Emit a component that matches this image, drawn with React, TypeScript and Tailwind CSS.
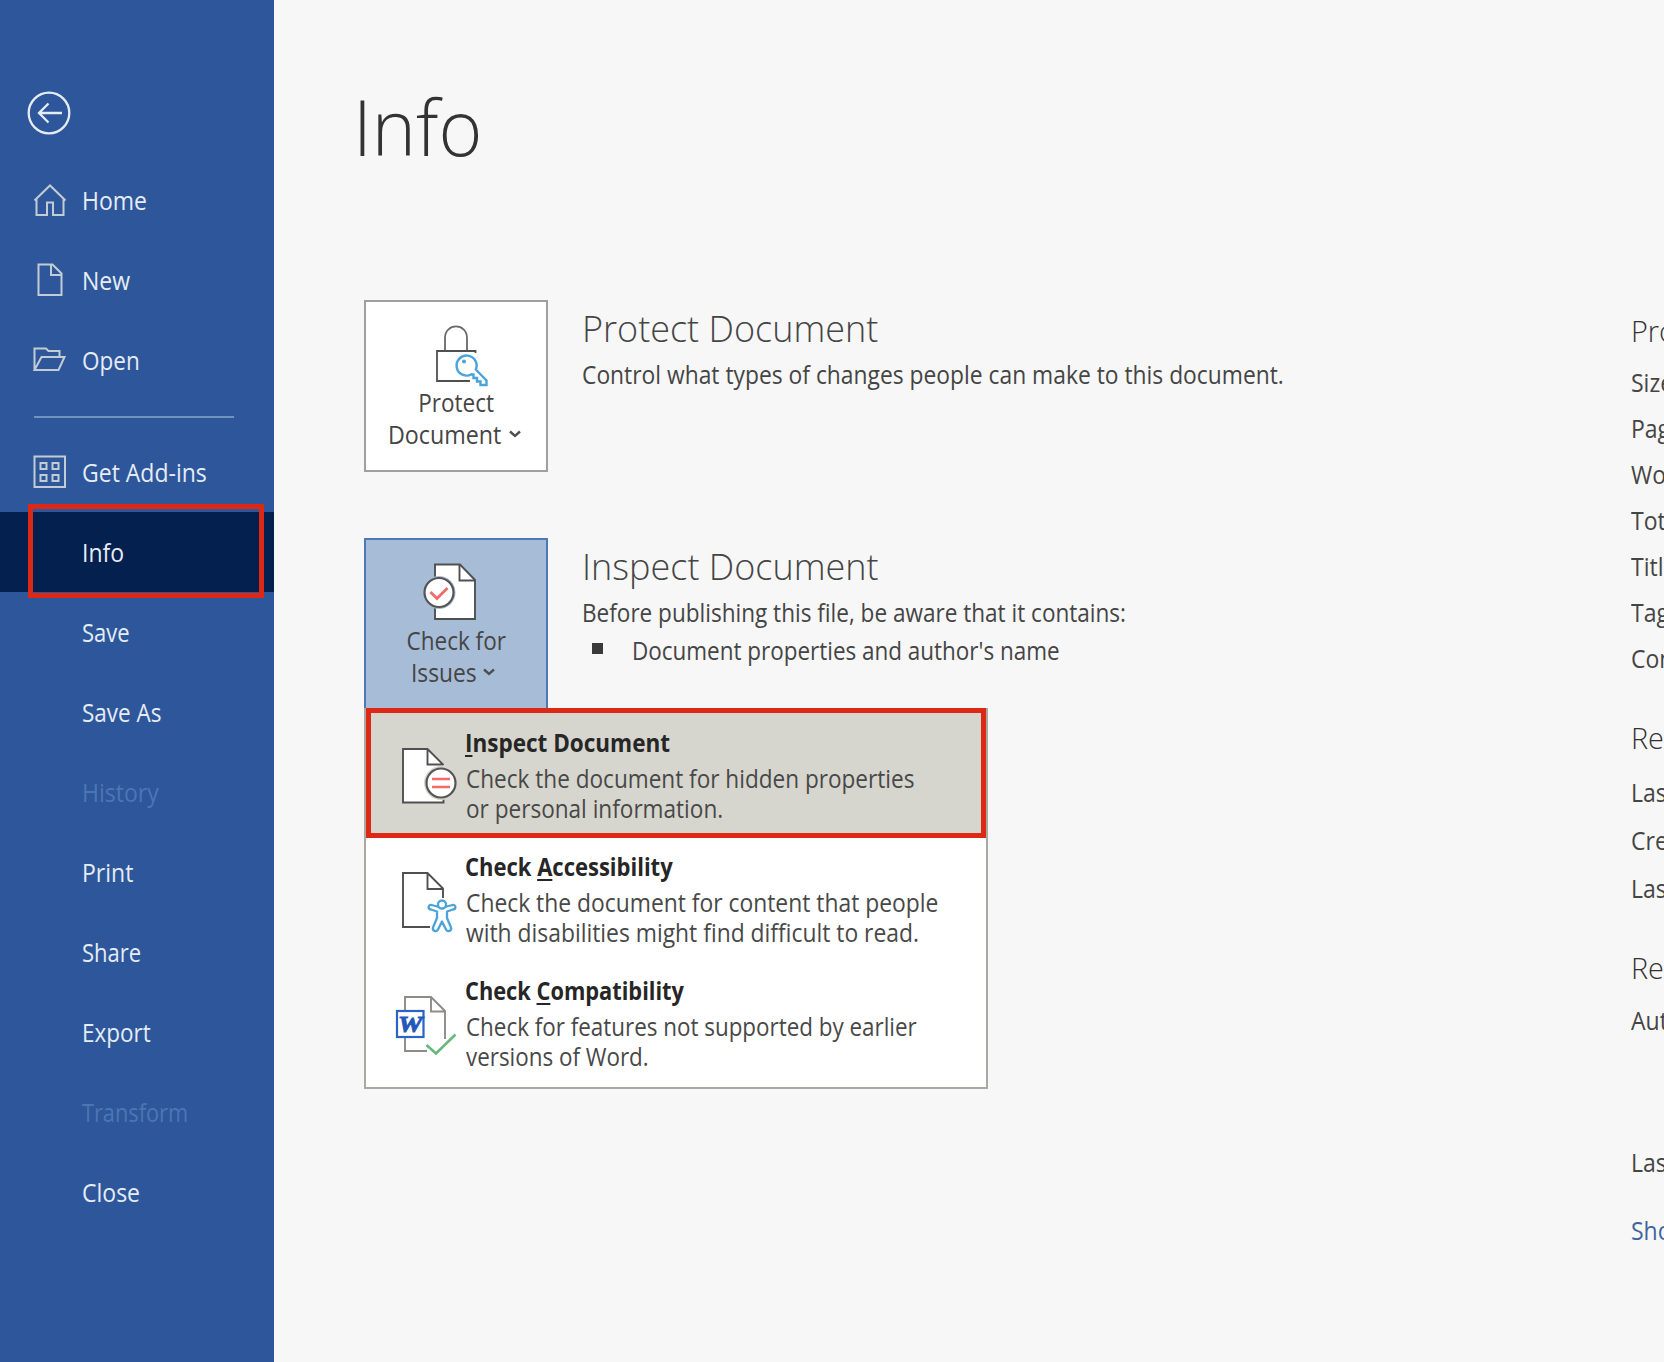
import type { ReactNode } from "react";

const NAV_STROKE = "#c3ccd2";
const DARK = "#505050";

function HomeIcon() {
  return (
    <svg width="34" height="34" viewBox="0 0 34 34" fill="none" stroke={NAV_STROKE} strokeWidth="2">
      <path d="M1.500 17.500 L17 2.500 L32.500 17.500 M3.500 16 V32 H14 V19.500 H20 V32 H30.500 V16" />
    </svg>
  );
}

function NewIcon() {
  return (
    <svg width="34" height="34" viewBox="0 0 34 34" fill="none" stroke={NAV_STROKE} strokeWidth="2">
      <path d="M5.500 1.500 H19.500 L28.500 10.500 V32 H5.500 Z M18 1.500 V12 H28.500" />
    </svg>
  );
}

function OpenIcon() {
  return (
    <svg width="34" height="34" viewBox="0 0 34 34" fill="none" stroke={NAV_STROKE} strokeWidth="2">
      <path d="M1.500 27 V5.500 H13 L15.500 8 H26.500 V14 M1.500 27 L8.500 14 H31.500 L25.500 27 Z" />
    </svg>
  );
}

function AddinsIcon() {
  return (
    <svg width="34" height="34" viewBox="0 0 34 34" fill="none" stroke={NAV_STROKE} strokeWidth="2">
      <rect x="1.500" y="1.500" width="30.500" height="30.500" />
      <rect x="7.500" y="8" width="6" height="6" />
      <rect x="19.500" y="8" width="6" height="6" />
      <rect x="7.500" y="20" width="6" height="6" />
      <rect x="19.500" y="20" width="6" height="6" />
    </svg>
  );
}

type NavItem = { label: string; icon?: ReactNode; disabled?: boolean; active?: boolean; scale?: string };

const topNav: NavItem[] = [
  { label: "Home", icon: <HomeIcon /> },
  { label: "New", icon: <NewIcon /> },
  { label: "Open", icon: <OpenIcon />, scale: "scale-x-[.9]" },
];

const bottomNav: NavItem[] = [
  { label: "Get Add-ins", icon: <AddinsIcon /> },
  { label: "Info", active: true },
  { label: "Save", scale: "scale-x-[.88]" },
  { label: "Save As", scale: "scale-x-[.9]" },
  { label: "History", disabled: true },
  { label: "Print" },
  { label: "Share", scale: "scale-x-[.88]" },
  { label: "Export", scale: "scale-x-[.9]" },
  { label: "Transform", disabled: true, scale: "scale-x-[.87]" },
  { label: "Close" },
];

function NavRow({ item }: { item: NavItem }) {
  return (
    <div className={`relative flex h-20 items-center pl-[33px] ${item.active ? "bg-[#04204f]" : ""}`}>
      <div className="h-[34px] w-[34px]">{item.icon}</div>
      <span
        className={`ml-[15px] origin-left text-[25px] leading-[80px] whitespace-nowrap ${
          item.scale ?? "scale-x-[.92]"
        } ${item.disabled ? "text-[#4c76b3]" : "text-[#e6ecf5]"}`}
      >
        {item.label}
      </span>
      {item.active && (
        <div className="absolute -top-[8px] left-[28px] h-[94px] w-[236px] border-[5px] border-[#dc2814]" />
      )}
    </div>
  );
}

function Chevron() {
  return (
    <svg width="12" height="8" viewBox="0 0 12 8" fill="none" stroke={DARK} strokeWidth="2.400">
      <path d="M1 1.500 L6 6 L11 1.500" />
    </svg>
  );
}

function LockKeyIcon() {
  return (
    <svg width="180" height="84" viewBox="366 302 180 84" fill="none" stroke={DARK} strokeWidth="1.800" className="block overflow-visible">
      <path d="M445 351 V338 C445 322.500 467 322.500 467 338 V351" stroke="#6a6a6a" />
      <path d="M475.500 353 V351 H437 V381 H470" />
      <path
        d="M471.500 374.300 A10 10 0 1 1 475.800 369.500 L486.500 380.500 V385 H480.500 V381.500 H477 V378 H473.500 V374.500 Z"
        fill="#fff"
        stroke="#4ba3dc"
        strokeWidth="2.400"
      />
      <circle cx="464" cy="361.500" r="2" fill="#4ba3dc" stroke="none" />
    </svg>
  );
}

function CheckDocIcon() {
  return (
    <svg width="180" height="84" viewBox="366 540 180 84" fill="none" stroke={DARK} strokeWidth="1.900" className="block overflow-visible">
      <path d="M435 564.500 H460 L475 580 V619 H435 Z" fill="#fff" />
      <path d="M459.500 564.500 V580.500 H475" />
      <circle cx="439" cy="592.500" r="16.500" fill="#a7bcd6" stroke="none" />
      <circle cx="439" cy="592.500" r="14.500" fill="#fff" stroke="#555" strokeWidth="2.200" />
      <path d="M430.500 592 L437 598.500 L447.500 588" stroke="#f26a6a" strokeWidth="2.800" />
    </svg>
  );
}

function InspectIcon() {
  return (
    <svg width="98" height="124" viewBox="366 713 98 124" fill="none" stroke={DARK} strokeWidth="1.900">
      <path d="M403 749 H427.500 L443.500 765 V802.500 H403 Z" fill="#fff" stroke="none" />
      <path d="M443.500 765 L427.500 749 H403 V802.500 H443.500 V799 M427.500 749 V764.500 H443.500" />
      <circle cx="441" cy="783" r="17" fill="#d6d6ce" stroke="none" />
      <circle cx="441" cy="783" r="14.500" fill="#fff" stroke="#555" strokeWidth="2.200" />
      <path d="M432 779 H450 M432 787 H450" stroke="#f26a6a" strokeWidth="2.400" />
    </svg>
  );
}

function AccessibilityIcon() {
  return (
    <svg width="98" height="124" viewBox="366 837 98 124" fill="none" stroke={DARK} strokeWidth="1.900">
      <path d="M430 927 H403 V873 H427.500 L443 888.500 V898 M427.500 873 V889 H443" />
      <g stroke="#4ba3dc" strokeWidth="2.300" strokeLinejoin="round">
        <path
          d="M437.500 906.500 L431.500 905 C428 904.500 427.500 909 431 909.500 L437 911.500 V918 L433 927.500 C432 931 436.500 932.500 438 929.500 L442 921.500 L446 929.500 C447.500 932.500 452 931 451 927.500 L447 918 V911.500 L453 909.500 C456.500 909 456 904.500 452.500 905 L446.500 906.500 Z"
          fill="#fff"
        />
        <circle cx="442" cy="904.500" r="4" fill="#fff" />
      </g>
    </svg>
  );
}

function CompatibilityIcon() {
  return (
    <svg width="98" height="124" viewBox="366 961 98 124" fill="none" stroke="#8f8b87" strokeWidth="1.900">
      <path d="M427 1051 H405 V997 H431 L445 1011 V1039 M431 997 V1011.500 H445" />
      <rect x="397" y="1011" width="26.500" height="26" fill="#fff" stroke="#2a63c4" strokeWidth="2.200" />
      <text
        x="398"
        y="1031.500"
        textLength="24.500"
        lengthAdjust="spacingAndGlyphs"
        fill="#2358bb"
        stroke="#2358bb"
        strokeWidth="0.900"
        fontFamily="'Liberation Serif', serif"
        fontStyle="italic"
        fontWeight="700"
        fontSize="24"
      >
        W
      </text>
      <path d="M426.500 1045 L436 1053.500 L455.500 1034.500" stroke="#66b97c" strokeWidth="2.600" />
    </svg>
  );
}

type MenuItem = {
  before: string;
  key: string;
  after: string;
  lines: [string, string];
  icon: ReactNode;
  titleScale: string;
  bodyScale: string;
  selected?: boolean;
};

const menu: MenuItem[] = [
  {
    before: "",
    key: "I",
    after: "nspect Document",
    lines: ["Check the document for hidden properties", "or personal information."],
    icon: <InspectIcon />,
    titleScale: "scale-x-[.9]",
    bodyScale: "scale-x-[.903]",
    selected: true,
  },
  {
    before: "Check ",
    key: "A",
    after: "ccessibility",
    lines: ["Check the document for content that people", "with disabilities might find difficult to read."],
    icon: <AccessibilityIcon />,
    titleScale: "scale-x-[.88]",
    bodyScale: "scale-x-[.914]",
  },
  {
    before: "Check ",
    key: "C",
    after: "ompatibility",
    lines: ["Check for features not supported by earlier", "versions of Word."],
    icon: <CompatibilityIcon />,
    titleScale: "scale-x-[.872]",
    bodyScale: "scale-x-[.896]",
  },
];

function MenuRow({ item }: { item: MenuItem }) {
  return (
    <div className={`flex h-[124px] ${item.selected ? "bg-[#d6d6ce]" : ""}`}>
      {item.icon}
      <div className="flex flex-col items-start pt-[12px] pl-px whitespace-nowrap">
        <div className={`origin-left text-[25px] leading-[34px] font-bold text-[#262626] ${item.titleScale}`}>
          {item.before}
          <span className="underline decoration-2 underline-offset-[3px]">{item.key}</span>
          {item.after}
        </div>
        <div className={`mt-1 ml-px origin-left text-[25px] leading-[30px] text-[#484848] ${item.bodyScale}`}>
          {item.lines[0]}
          <br />
          {item.lines[1]}
        </div>
      </div>
    </div>
  );
}

function SideHeading({ children }: { children: ReactNode }) {
  return <div className="origin-left scale-x-[.96] text-[30px] leading-[46px] font-[350] text-[#333]">{children}</div>;
}

function SideRow({ children }: { children: ReactNode }) {
  return <div className="origin-left scale-x-[.92] text-[25px] leading-[46px]">{children}</div>;
}

export default function App() {
  return (
    <div className="flex h-[1362px] w-[1664px] overflow-hidden bg-[#f7f7f7] font-['Open_Sans',sans-serif] text-[#454545]">
      <nav className="w-[274px] shrink-0 bg-[#2d579a]">
        <div className="h-40 pt-[91px] pl-[27px]">
          <svg width="44" height="44" viewBox="0 0 44 44" fill="none" stroke="#e6ecf5" strokeWidth="2.300">
            <circle cx="22" cy="22" r="20.300" />
            <path d="M35 22 H12.500 M21.500 12.500 L12 22 L21.500 31.500" />
          </svg>
        </div>
        {topNav.map((item) => (
          <NavRow key={item.label} item={item} />
        ))}
        <div className="h-8 pt-4">
          <div className="ml-[34px] h-[2px] w-[200px] bg-[#6f94bf]" />
        </div>
        {bottomNav.map((item) => (
          <NavRow key={item.label} item={item} />
        ))}
      </nav>

      <main className="w-[1356px] shrink-0 pt-[76px] pl-[90px]">
        <h1 className="-ml-[11px] origin-left scale-x-[.96] text-[78px] leading-[100px] font-light text-[#333]">Info</h1>

        <section className="mt-[124px] flex h-[172px]">
          <div className="w-[184px] border-2 border-[#9f9f9f] bg-white text-[25px] leading-8">
            <LockKeyIcon />
            <div className="flex justify-center">
              <span className="scale-x-[.9]">Protect</span>
            </div>
            <div className="flex items-center pl-[22px]">
              <span className="w-[121px] origin-left scale-x-[.93]">Document</span>
              <Chevron />
            </div>
          </div>
          <div className="ml-[34px] flex flex-col items-start pt-[7px] whitespace-nowrap">
            <h2 className="text-[36px] leading-[44px] font-[340]">Protect Document</h2>
            <p className="mt-[5px] origin-left scale-x-[.913] text-[25px] leading-9">
              Control what types of changes people can make to this document.
            </p>
          </div>
        </section>

        <section className="relative mt-[66px] flex h-[172px]">
          <div className="w-[184px] border-2 border-[#4f78b5] bg-[#a7bcd6] text-[25px] leading-8">
            <CheckDocIcon />
            <div className="flex justify-center">
              <span className="scale-x-[.9]">Check for</span>
            </div>
            <div className="flex items-center pl-[45px]">
              <span className="w-[72px] origin-left scale-x-[.91]">Issues</span>
              <Chevron />
            </div>
          </div>
          <div className="ml-[34px] flex flex-col items-start pt-[7px] whitespace-nowrap">
            <h2 className="text-[36px] leading-[44px] font-[340]">Inspect Document</h2>
            <p className="mt-[5px] origin-left scale-x-[.902] text-[25px] leading-9">
              Before publishing this file, be aware that it contains:
            </p>
            <div className="mt-[2px] flex items-center pl-[10px]">
              <div className="-mt-1 h-[11px] w-[11px] bg-[#3a3a3a]" />
              <p className="ml-[29px] origin-left scale-x-[.898] text-[25px] leading-9">
                Document properties and author's name
              </p>
            </div>
          </div>

          <div className="absolute top-[170px] left-0 h-[381px] w-[624px] border-2 border-[#a8aaa2] bg-white pt-[3px]">
            {menu.map((item) => (
              <MenuRow key={item.key} item={item} />
            ))}
            <div className="absolute -top-[2px] left-0 h-[130px] w-[620px] border-[5px] border-[#dc2814]" />
          </div>
        </section>
      </main>

      <aside className="flex w-[34px] shrink-0 flex-col items-start overflow-hidden pt-[308px] pl-px whitespace-nowrap">
        <SideHeading>Properties</SideHeading>
        <div className="mt-[5px]">
          {["Size", "Pages", "Words", "Total Editing Time", "Title", "Tags", "Comments"].map((label) => (
            <SideRow key={label}>{label}</SideRow>
          ))}
        </div>
        <div className="mt-[34px]">
          <SideHeading>Related Dates</SideHeading>
        </div>
        <div className="mt-[8px] flex flex-col gap-[2px]">
          {["Last Modified", "Created", "Last Printed"].map((label) => (
            <SideRow key={label}>{label}</SideRow>
          ))}
        </div>
        <div className="mt-[34px]">
          <SideHeading>Related People</SideHeading>
        </div>
        <div className="mt-[6px]">
          <SideRow>Author</SideRow>
        </div>
        <div className="mt-[96px]">
          <SideRow>Last Modified By</SideRow>
        </div>
        <div className="mt-[22px] text-[#3f659f]">
          <SideRow>Show All Properties</SideRow>
        </div>
      </aside>
    </div>
  );
}
